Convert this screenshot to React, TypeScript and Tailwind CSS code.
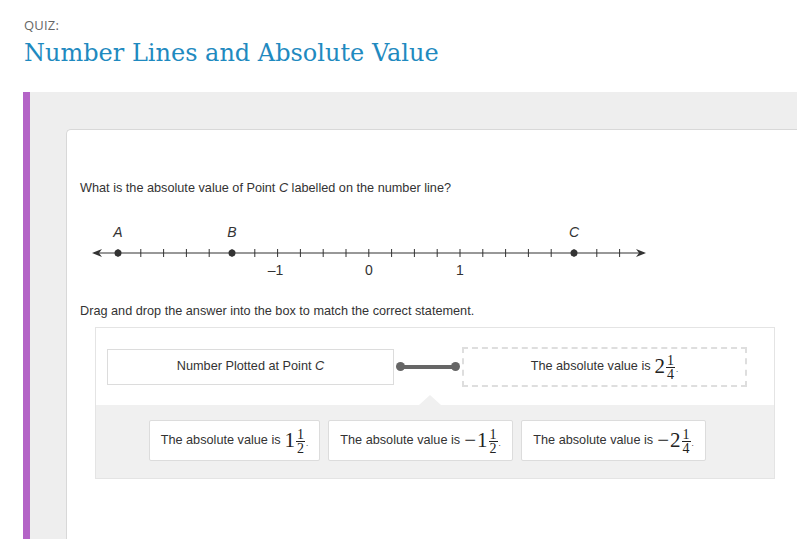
import React from "react";

const ticks = Array.from({ length: 23 }, (_, i) => -2.75 + i * 0.25);
const px = (v: number) => 288.8 + v * 91.2;

function Frac({ whole, num, den, neg }: { whole: string; num: string; den: string; neg?: boolean }) {
  return (
    <span className="inline-flex items-center align-middle font-['Liberation_Serif',serif] text-[#222]">
      {neg && <span className="text-[21px] leading-none mr-[1px]">−</span>}
      <span className="text-[21px] leading-none">{whole}</span>
      <span className="inline-flex flex-col items-center text-[14px] leading-[12px] ml-[1px] mt-[3px]">
        <span>{num}</span>
        <span className="border-t border-[#222] px-[1px] pt-[1px]">{den}</span>
      </span>
      <span className="text-[9px] self-end mb-[5px] ml-[1px]">.</span>
    </span>
  );
}

function Choice({ children, w }: { children: React.ReactNode; w: string }) {
  return (
    <div className={`${w} h-[41px] bg-white border border-[#dcdcdc] rounded-[2px] flex items-center justify-center gap-[4px] text-[12.7px] text-[#333]`}>
      <span>The absolute value is</span>
      {children}
    </div>
  );
}

function NumberLine() {
  return (
    <svg width="580" height="62" className="block mt-[23px]" fill="#333" stroke="#333">
      <line x1="14" y1="35" x2="564" y2="35" strokeWidth="1.2" />
      <polygon points="12,35 22,31 19,35 22,39" stroke="none" />
      <polygon points="566,35 556,31 559,35 556,39" stroke="none" />
      {ticks.map((t) => (
        <line key={t} x1={px(t)} y1="31" x2={px(t)} y2="39" strokeWidth="1" />
      ))}
      {[-2.75, -1.5, 2.25].map((v) => (
        <circle key={v} cx={px(v)} cy="35" r="3.5" stroke="none" />
      ))}
      <g stroke="none" fontFamily="Liberation Sans, Arial, sans-serif" fontSize="14" fontStyle="italic" textAnchor="middle">
        <text x={px(-2.75)} y="19">A</text>
        <text x={px(-1.5)} y="19">B</text>
        <text x={px(2.25)} y="19">C</text>
      </g>
      <g stroke="none" fontFamily="Liberation Sans, Arial, sans-serif" fontSize="14" textAnchor="middle">
        <text x={px(-1) - 2} y="57">–1</text>
        <text x={px(0)} y="57">0</text>
        <text x={px(1)} y="57">1</text>
      </g>
    </svg>
  );
}

export default function App() {
  return (
    <div className="w-[800px] h-[539px] overflow-hidden bg-white font-['Liberation_Sans',Arial,sans-serif] flex flex-col">
      {/* Header */}
      <div className="pl-[24px] pt-[17px] h-[92px]">
        <div className="text-[13px] leading-[16px] text-[#666] font-['Open_Sans',sans-serif] tracking-[0.2px]">QUIZ:</div>
        <h1 className="mt-[5px] text-[24px] leading-[30px] text-[#1f8ac0] font-['DejaVu_Serif',serif]">
          Number Lines and Absolute Value
        </h1>
      </div>

      {/* Quiz panel */}
      <div className="flex flex-1 pl-[23px] mr-[3px]">
        <div className="w-[7px] bg-[#b464c7]" />
        <div className="flex-1 bg-[#eeeeee] pt-[37px] pl-[36px] flex">
          <div className="flex-1 bg-white border-l border-t border-[#d8d8d8] rounded-tl-[5px] pl-[13px] pt-[51px]">
            <p className="text-[12.7px] leading-[14px] text-[#333]">
              What is the absolute value of Point <i>C</i> labelled on the number line?
            </p>

            <NumberLine />

            <p className="mt-[24px] text-[12.7px] leading-[14px] text-[#333]">
              Drag and drop the answer into the box to match the correct statement.
            </p>

            {/* Matching area */}
            <div className="ml-[15px] mt-[9px] w-[680px] border border-[#e4e4e4]">
              <div className="h-[77px] flex items-center pl-[11px]">
                <div className="w-[287px] h-[36px] border border-[#dcdcdc] flex items-center justify-center text-[12.7px] text-[#333]">
                  <span>
                    Number Plotted at Point <i>C</i>
                  </span>
                </div>
                <div className="w-[68px] flex items-center pl-[2px]">
                  <span className="w-[9px] h-[9px] rounded-full bg-[#666]" />
                  <span className="w-[48px] h-[4px] bg-[#666] -mx-[1px]" />
                  <span className="w-[9px] h-[9px] rounded-full bg-[#666]" />
                </div>
                <div className="w-[285px] h-[40px] border-2 border-dashed border-[#dedede] bg-white flex items-center justify-center gap-[4px] text-[12.7px] text-[#333]">
                  <span>The absolute value is</span>
                  <Frac whole="2" num="1" den="4" />
                </div>
              </div>
              <div className="relative bg-[#f0f0f0] h-[73px] flex items-start pt-[15px] pl-[53px] gap-[8px]">
                <div className="absolute -top-[10px] left-[323px] w-0 h-0 border-l-[11px] border-r-[11px] border-b-[10px] border-l-transparent border-r-transparent border-b-[#f0f0f0]" />
                <Choice w="w-[171px]">
                  <Frac whole="1" num="1" den="2" />
                </Choice>
                <Choice w="w-[185px]">
                  <Frac whole="1" num="1" den="2" neg />
                </Choice>
                <Choice w="w-[185px]">
                  <Frac whole="2" num="1" den="4" neg />
                </Choice>
              </div>
            </div>
          </div>
        </div>
      </div>
    </div>
  );
}
